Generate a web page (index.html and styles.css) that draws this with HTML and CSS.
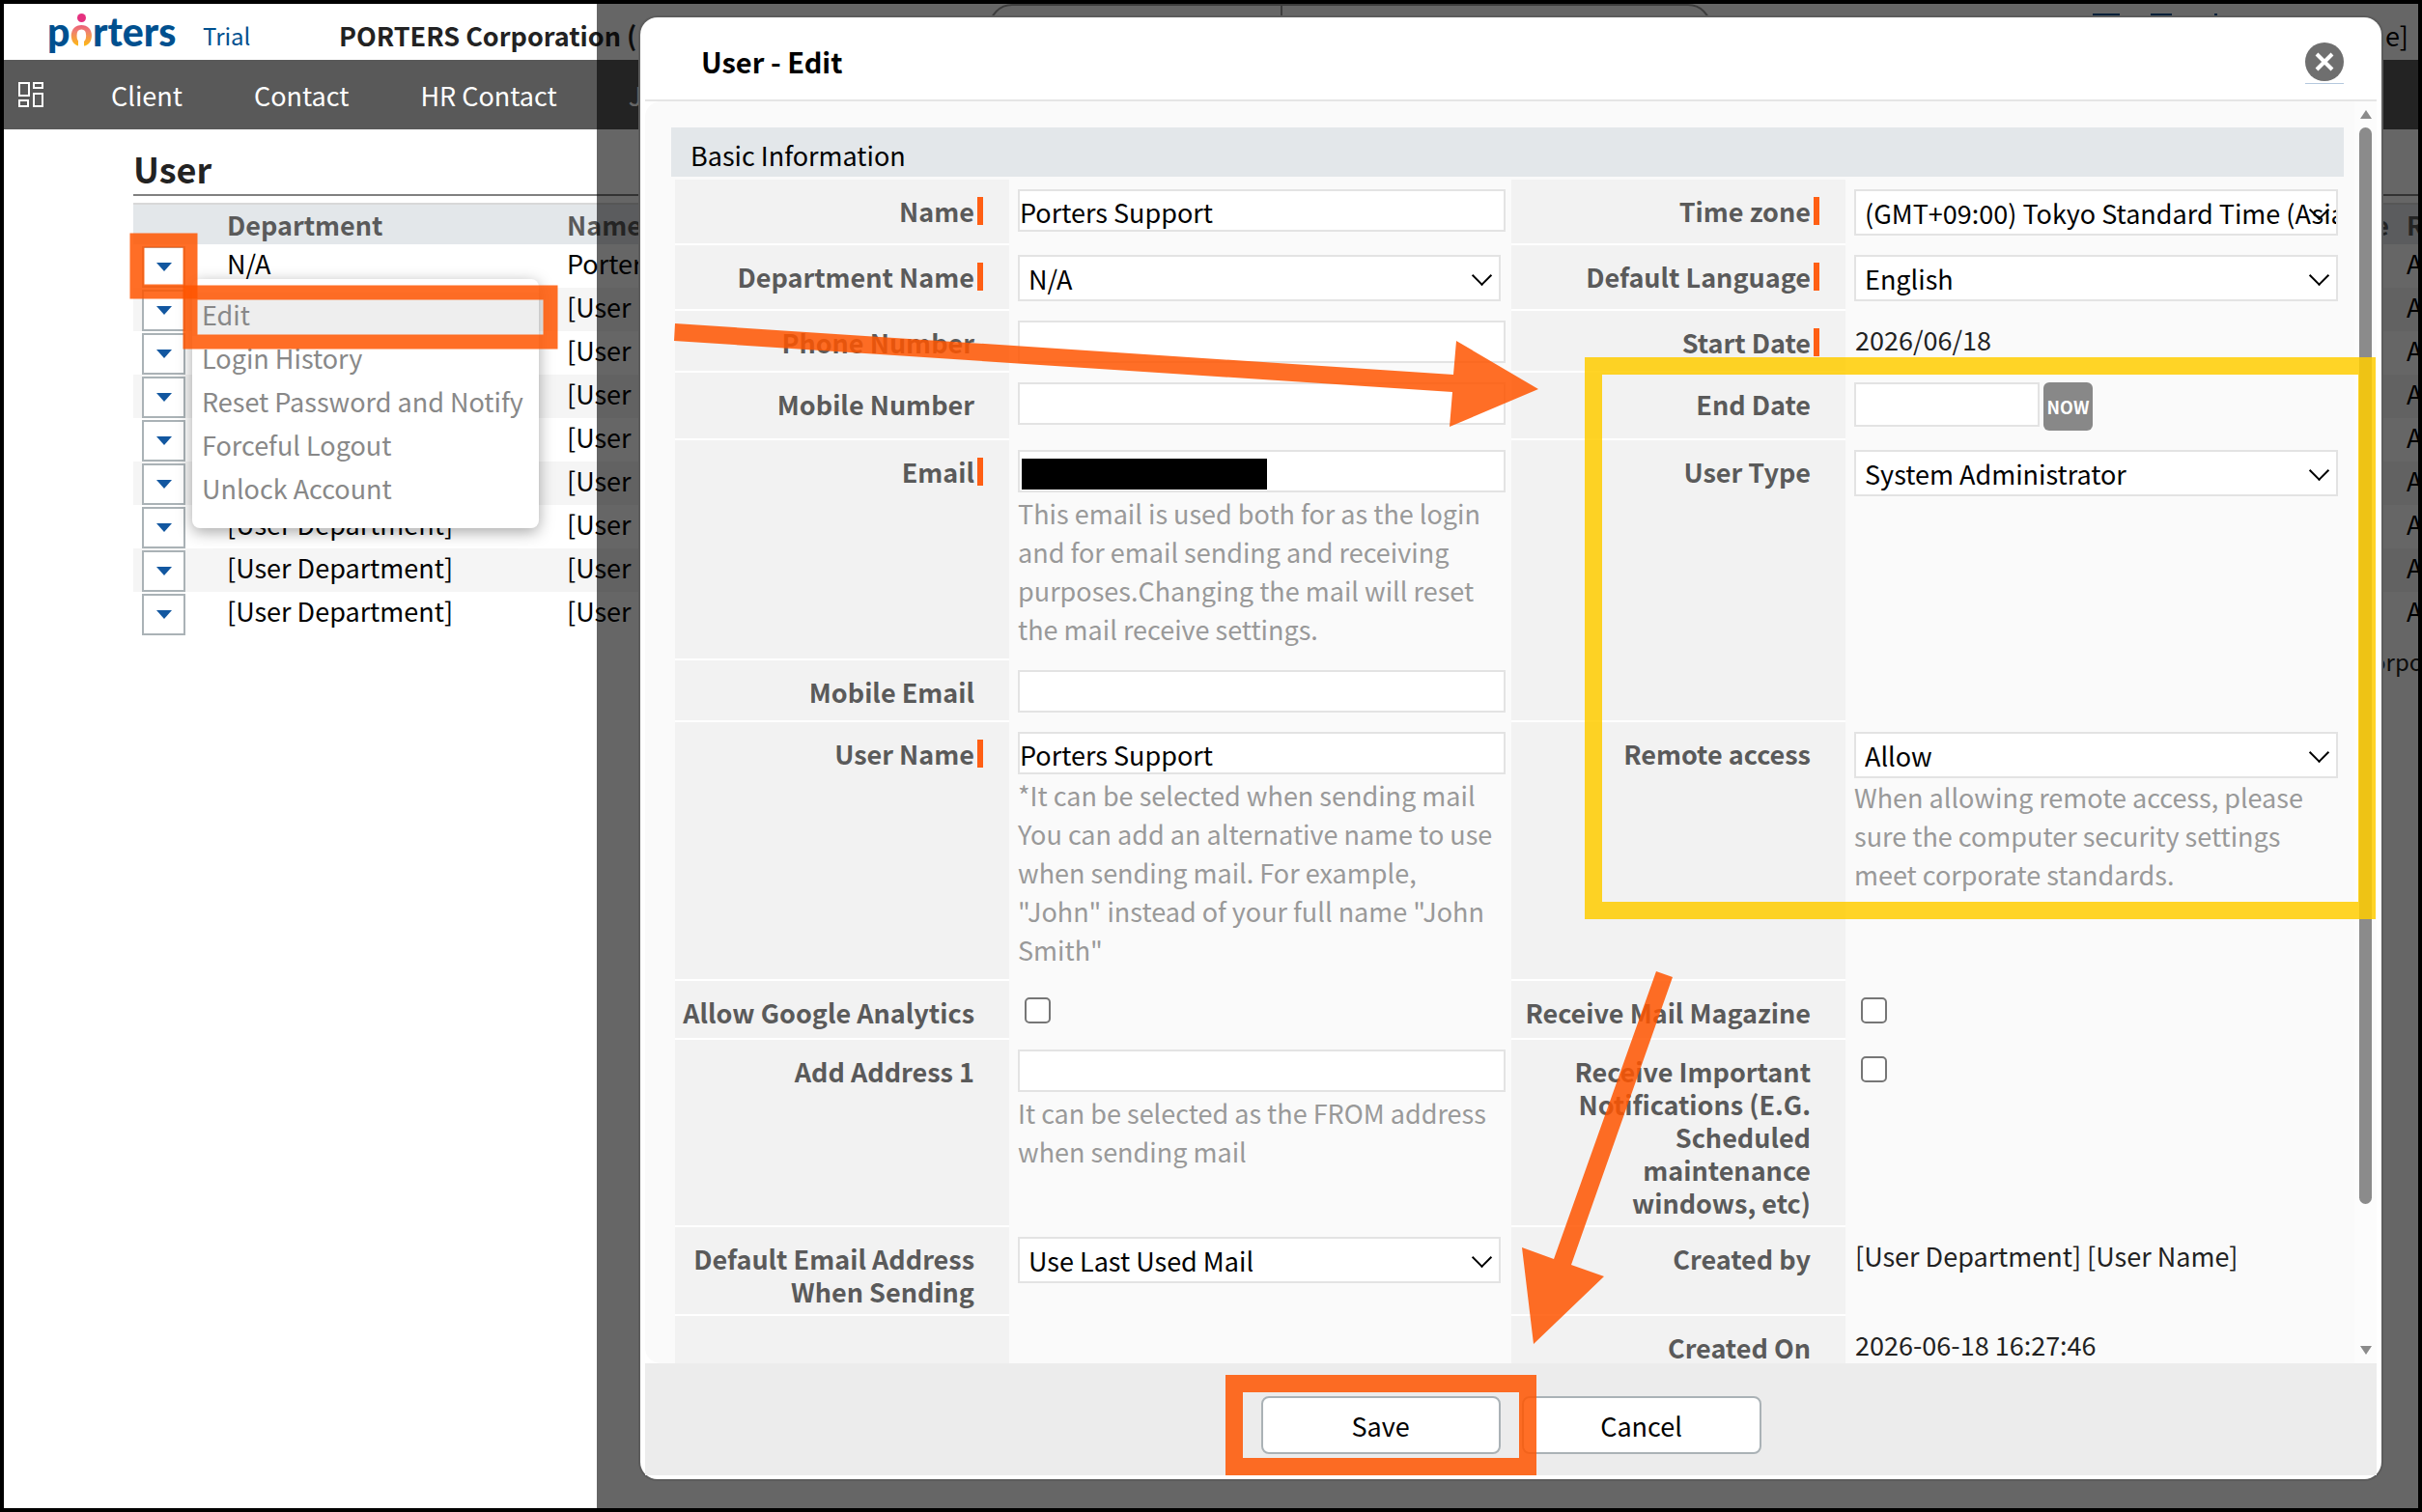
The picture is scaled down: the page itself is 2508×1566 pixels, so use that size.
FILE: index.html
```html
<!DOCTYPE html>
<html lang="en">
<head>
  <meta charset="UTF-8">
  <title>User - Edit</title>
  <link rel="stylesheet" href="styles.css">
</head>
<body>
<div class="page">
  <header class="topbar">
    <div class="logo">p<span class="logo-o">o</span>rters</div>
    <a href="#" class="trial">Trial</a>
    <strong class="company">PORTERS Corporation (</strong>
    <div class="search"><span></span></div>
    <div class="top-icons"><i class="top-doc"></i><i class="top-gear"></i><i class="top-help"></i></div>
    <a href="#" class="account">[User Name]</a>
  </header>
  <nav class="navbar">
    <svg class="grid-icon" viewBox="0 0 26 26" fill="none" stroke="#fff" stroke-width="2">
      <rect x="1" y="1" width="10" height="13"/>
      <rect x="16" y="1" width="9" height="5"/>
      <rect x="1" y="19" width="9" height="6"/>
      <rect x="16" y="12" width="9" height="13"/>
    </svg>
    <a href="#">Client</a>
    <a href="#">Contact</a>
    <a href="#">HR Contact</a>
    <a href="#">Job</a>
  </nav>
  <main class="content">
    <h1>User</h1>
    <table class="users">
      <colgroup><col class="c-action"><col class="c-dept"><col><col class="c-type"><col class="c-role"></colgroup>
      <thead>
        <tr><th></th><th>Department</th><th>Name</th><th class="right">Type</th><th>Role</th></tr>
      </thead>
      <tbody>
        <tr>
          <td>
            <div class="action">
              <button type="button" class="drop" aria-label="Actions"></button>
              <ul class="menu">
                <li class="active"><a href="#">Edit</a></li>
                <li><a href="#">Login History</a></li>
                <li><a href="#">Reset Password and Notify</a></li>
                <li><a href="#">Forceful Logout</a></li>
                <li><a href="#">Unlock Account</a></li>
              </ul>
            </div>
          </td>
          <td>N/A</td><td>Porters Support</td><td></td><td>Admin</td>
        </tr>
        <tr><td><button type="button" class="drop" aria-label="Actions"></button></td><td>[User Department]</td><td>[User Name]</td><td></td><td>Admin</td></tr>
        <tr><td><button type="button" class="drop" aria-label="Actions"></button></td><td>[User Department]</td><td>[User Name]</td><td></td><td>Admin</td></tr>
        <tr><td><button type="button" class="drop" aria-label="Actions"></button></td><td>[User Department]</td><td>[User Name]</td><td></td><td>Admin</td></tr>
        <tr><td><button type="button" class="drop" aria-label="Actions"></button></td><td>[User Department]</td><td>[User Name]</td><td></td><td>Admin</td></tr>
        <tr><td><button type="button" class="drop" aria-label="Actions"></button></td><td>[User Department]</td><td>[User Name]</td><td></td><td>Admin</td></tr>
        <tr><td><button type="button" class="drop" aria-label="Actions"></button></td><td>[User Department]</td><td>[User Name]</td><td></td><td>Admin</td></tr>
        <tr><td><button type="button" class="drop" aria-label="Actions"></button></td><td>[User Department]</td><td>[User Name]</td><td></td><td>Admin</td></tr>
        <tr><td><button type="button" class="drop" aria-label="Actions"></button></td><td>[User Department]</td><td>[User Name]</td><td></td><td>Admin</td></tr>
      </tbody>
    </table>
    <p class="copyright">&copy; PORTERS Corporation</p>
  </main>

  <div class="overlay">
    <form class="modal">
      <div class="modal-header">
        <h2>User - Edit</h2>
        <button type="button" class="close" aria-label="Close">
          <svg viewBox="0 0 40 40">
            <circle cx="20" cy="20" r="20" fill="#6f6f6f"/>
            <path d="M12 12 L28 28 M28 12 L12 28" stroke="#fff" stroke-width="4"/>
          </svg>
        </button>
      </div>
      <div class="modal-body">
        <div class="form-area">
          <h3>Basic Information</h3>
          <table class="fields">
            <colgroup><col class="c-label"><col class="c-value"><col class="c-label"><col></colgroup>
            <tr>
              <th><label class="required" for="name">Name</label></th>
              <td><input type="text" id="name" value="Porters Support"></td>
              <th><label class="required" for="zone">Time zone</label></th>
              <td><div class="select"><select id="zone"><option>(GMT+09:00) Tokyo Standard Time (Asia/Tokyo)</option></select></div></td>
            </tr>
            <tr>
              <th><label class="required" for="dept">Department Name</label></th>
              <td><div class="select"><select id="dept"><option>N/A</option></select></div></td>
              <th><label class="required" for="lang">Default Language</label></th>
              <td><div class="select"><select id="lang"><option>English</option></select></div></td>
            </tr>
            <tr>
              <th><label for="phone">Phone Number</label></th>
              <td><input type="text" id="phone"></td>
              <th><span class="required">Start Date</span></th>
              <td><div class="plain">2026/06/18</div></td>
            </tr>
            <tr>
              <th><label for="mobile">Mobile Number</label></th>
              <td><input type="text" id="mobile"></td>
              <th><label for="end">End Date</label></th>
              <td><div class="date"><input type="text" id="end"><button type="button" class="now">NOW</button></div></td>
            </tr>
            <tr>
              <th><label class="required" for="email">Email</label></th>
              <td>
                <div class="masked"><input type="text" id="email"><span></span></div>
                <p class="hint">This email is used both for as the login and for email sending and receiving purposes.Changing the mail will reset the mail receive settings.</p>
              </td>
              <th rowspan="2"><label for="type">User Type</label></th>
              <td rowspan="2"><div class="select"><select id="type"><option>System Administrator</option></select></div></td>
            </tr>
            <tr>
              <th><label for="memail">Mobile Email</label></th>
              <td><input type="text" id="memail"></td>
            </tr>
            <tr>
              <th><label class="required" for="uname">User Name</label></th>
              <td>
                <input type="text" id="uname" value="Porters Support">
                <p class="hint">*It can be selected when sending mail<br>You can add an alternative name to use when sending mail. For example, "John" instead of your full name "John Smith"</p>
              </td>
              <th><label for="remote">Remote access</label></th>
              <td>
                <div class="select"><select id="remote"><option>Allow</option></select></div>
                <p class="hint">When allowing remote access, please sure the computer security settings meet corporate standards.</p>
              </td>
            </tr>
            <tr>
              <th><label for="ga">Allow Google Analytics</label></th>
              <td class="check"><input type="checkbox" id="ga"></td>
              <th><label for="magazine">Receive Mail Magazine</label></th>
              <td class="check"><input type="checkbox" id="magazine"></td>
            </tr>
            <tr>
              <th><label for="addr">Add Address 1</label></th>
              <td>
                <input type="text" id="addr">
                <p class="hint">It can be selected as the FROM address when sending mail</p>
              </td>
              <th><label for="notif">Receive Important Notifications (E.G. Scheduled maintenance windows, etc)</label></th>
              <td class="check"><input type="checkbox" id="notif"></td>
            </tr>
            <tr>
              <th><label for="sendmail">Default Email Address When Sending</label></th>
              <td><div class="select"><select id="sendmail"><option>Use Last Used Mail</option></select></div></td>
              <th>Created by</th>
              <td><div class="plain">[User Department] [User Name]</div></td>
            </tr>
            <tr>
              <th></th>
              <td></td>
              <th>Created On</th>
              <td><div class="plain">2026-06-18 16:27:46</div></td>
            </tr>
          </table>
        </div>
        <div class="scrollbar">
          <span class="arrow-up"></span>
          <span class="track"><span class="thumb"></span></span>
          <span class="arrow-down"></span>
        </div>
      </div>
      <div class="modal-footer">
        <button type="button" class="btn">Save</button>
        <button type="button" class="btn">Cancel</button>
      </div>
    </form>
  </div>

  <!-- step markers drawn over the screen -->
  <svg class="marks" width="2508" height="1566">
    <g fill="none" stroke="#ff5500" stroke-opacity=".85">
      <rect x="142" y="249" width="55" height="53" stroke-width="15"/>
      <rect x="197" y="303" width="373" height="51" stroke-width="15"/>
      <rect x="1278" y="1433" width="304" height="86" stroke-width="18"/>
    </g>
    <rect x="1650" y="379" width="801" height="564" fill="none" stroke="#ffcc00" stroke-opacity=".85" stroke-width="18"/>
    <g fill="#ff5500" fill-opacity=".85">
      <polygon points="699,335 1505,388 1508,353 1593,403 1501,442 1504,406 698,353"/>
      <polygon points="1715,1006 1732,1012 1627,1310 1661,1322 1588,1392 1576,1292 1609,1304"/>
    </g>
  </svg>
</div>
</body>
</html>
```
FILE: styles.css
```css
* { box-sizing: border-box; }
body {
  margin: 0;
  font-family: "Noto Sans CJK JP", "Noto Sans", sans-serif;
  font-size: 27px;
  line-height: 41px;
  color: #222;
}
a { color: inherit; text-decoration: none; }
p, h1, h2, h3, ul { margin: 0; padding: 0; }
button, input, select { font: inherit; color: #000; }
.page {
  position: relative;
  height: 100vh;
  border: 4px solid #000;
  background: #fff;
  overflow: hidden;
}

/* top bar */
.topbar {
  position: relative;
  display: flex;
  align-items: center;
  height: 58px;
  padding: 6px 10px 0 45px;
}
.logo {
  width: 161px;
  font-family: Lato, sans-serif;
  font-weight: 900;
  font-size: 41px;
  line-height: 48px;
  padding-bottom: 6px;
  color: #00508f;
}
.logo-o {
  position: relative;
  color: transparent;
  background: linear-gradient(#e5317f 20%, #f08070 50%, #fdb913 80%);
  -webkit-background-clip: text;
  background-clip: text;
}
.logo-o::before {
  content: "";
  position: absolute;
  left: 8px;
  top: 6px;
  width: 9px;
  height: 9px;
  border-radius: 50%;
  background: #e5317f;
}
.logo-o::after {
  content: "";
  position: absolute;
  left: 9px;
  bottom: 8px;
  width: 6px;
  height: 8px;
  background: #fff;
}
.trial { width: 141px; font-size: 24px; color: #00508f; }
.company { white-space: nowrap; }
.search {
  position: absolute;
  left: 1020px;
  top: 0;
  width: 748px;
  height: 60px;
  border: 2px solid #999;
  border-radius: 24px;
}
.search span { display: block; width: 302px; height: 56px; border-right: 2px solid #999; }
.top-icons {
  position: absolute;
  right: 208px;
  top: 10px;
  display: flex;
  gap: 32px;
}
.top-icons i { height: 26px; border-top: 2px solid #00508f; }
.top-doc { width: 28px; }
.top-gear { width: 22px; }
.top-help { width: 3px; margin-left: 12px; }
.account { margin-left: auto; color: #000; }

.navbar {
  display: flex;
  align-items: center;
  gap: 74px;
  height: 72px;
  padding-left: 15px;
  background: #595959;
  color: #fff;
}
.navbar .grid-icon { width: 26px; height: 26px; margin-right: -4px; }

/* user list */
.content { padding-left: 134px; }
h1 {
  margin: 13px 0 7px;
  font-size: 36px;
  line-height: 54px;
  border-bottom: 2px solid #808080;
}
.users {
  width: 100%;
  table-layout: fixed;
  border-collapse: separate;
  border-spacing: 0;
  color: #000;
}
.c-action { width: 97px; }
.c-dept { width: 352px; }
.c-type { width: 120px; }
.c-role { width: 12px; }
.users th {
  padding: 0;
  border-top: 2px solid #d8d8d8;
  background: #e3e7ea;
  text-align: left;
  color: #5a5a5a;
}
.users th.right { text-align: right; padding-right: 18px; }
.users td {
  height: 45px;
  padding: 0;
  line-height: 40px;
  vertical-align: top;
  white-space: nowrap;
}
.users tbody tr:nth-child(even) { background: #f5f5f5; }
.users td:first-child { padding: 2px 0 0 9px; }
.action { position: relative; }
.drop {
  display: flex;
  align-items: center;
  justify-content: center;
  width: 45px;
  height: 43px;
  padding: 0;
  border: 2px solid #aab2b6;
  background: #fff;
}
.drop::before {
  content: "";
  border: 8px solid transparent;
  border-top: 9px solid #1257a0;
  border-bottom: 0;
}
.menu {
  position: absolute;
  z-index: 1;
  left: 52px;
  top: 34px;
  width: 359px;
  padding: 14px 0 19px;
  border-radius: 8px;
  background: #fff;
  box-shadow: 0 4px 16px rgba(0,0,0,0.35);
  list-style: none;
  color: #888;
}
.menu li { padding-left: 10px; line-height: 45px; }
.menu .active { background: #eee; }
.copyright {
  margin: 6px -72px 0 0;
  font-size: 24px;
  text-align: right;
}

/* dialog */
.overlay {
  position: absolute;
  z-index: 2;
  top: 0;
  right: 0;
  bottom: 0;
  left: 614px;
  display: flex;
  padding: 14px 38px 30px 45px;
  background: rgba(0,0,0,0.6);
}
.modal {
  flex: 1;
  display: flex;
  flex-direction: column;
  padding: 0 5px 4px;
  border-radius: 18px;
  background: #fff;
  box-shadow: 0 0 0 2px #5c5c5c;
}
.modal-header {
  display: flex;
  align-items: center;
  justify-content: space-between;
  height: 87px;
  padding: 6px 34px 0 58px;
  border-bottom: 2px solid #e5e5e5;
}
h2 { font-size: 29px; color: #000; }
.close {
  width: 40px;
  height: 44px;
  margin-top: 2px;
  padding: 0;
  border: 0;
  border-bottom: 1px solid #b4c8de;
  background: none;
}
.close svg { display: block; width: 40px; height: 40px; }
.modal-body {
  flex: 1;
  display: flex;
  min-height: 0;
  border-radius: 16px 0 0 16px;
  background: #fafafa;
  overflow: hidden;
}
.form-area { flex: 1; padding: 27px 11px 0 27px; }
h3 {
  padding: 8px 20px 2px;
  background: #e3e7ea;
  font-size: 27px;
  font-weight: normal;
  color: #000;
}
.form-area .fields {
  width: calc(100% - 4px);
  margin: 3px 0 0 4px;
  table-layout: fixed;
  border-spacing: 0;
}
.c-label { width: 346px; }
.c-value { width: 520px; }
.fields th {
  position: relative;
  padding: 16px 36px 6px 6px;
  border-bottom: 2px solid #fff;
  background: #f2f2f2;
  text-align: right;
  vertical-align: top;
  line-height: 34px;
  color: #5a5a5a;
}
.required::after {
  content: "";
  position: absolute;
  right: 27px;
  top: 18px;
  width: 6px;
  height: 29px;
  background: #ff5f14;
}
.fields td { padding: 10px 6px 10px 9px; vertical-align: top; }
.fields input[type="text"] {
  display: block;
  width: 100%;
  height: 44px;
  padding: 2px 0 0;
  border: 2px solid #e3e3e3;
  background: #fff;
}
.select { position: relative; margin-right: 5px; }
td:last-child .select { margin-right: 0; }
.select select {
  display: block;
  width: 100%;
  height: 48px;
  padding: 0 0 0 9px;
  border: 2px solid #e3e3e3;
  border-radius: 0;
  background: #fff;
  appearance: none;
}
.select::after {
  content: "";
  position: absolute;
  right: 12px;
  top: 14px;
  width: 13px;
  height: 13px;
  border: solid #000;
  border-width: 0 2px 2px 0;
  transform: rotate(45deg);
  pointer-events: none;
}
.plain { padding-left: 1px; line-height: 40px; }
.hint { padding: 2px 0; line-height: 40px; color: #999; }
.select + .hint { padding-top: 0; }
.date { display: flex; gap: 4px; }
.fields .date input { width: 192px; height: 46px; }
.now {
  width: 51px;
  height: 50px;
  padding: 0;
  border: 0;
  border-radius: 6px;
  background: #888;
  font-size: 18px;
  font-weight: bold;
  color: #fff;
}
.masked { position: relative; }
.masked span {
  position: absolute;
  left: 4px;
  top: 9px;
  width: 254px;
  height: 32px;
  background: #000;
}
.fields .check { line-height: 0; padding: 17px 16px; }
.check input {
  width: 27px;
  height: 27px;
  margin: 0;
  border: 2px solid #767676;
  border-radius: 5px;
  background: #fff;
  appearance: none;
}
.scrollbar {
  display: flex;
  flex-direction: column;
  align-items: center;
  width: 23px;
  padding: 9px 0;
  background: #fcfcfc;
}
.track { flex: 1; padding: 9px 0; }
.thumb { display: block; width: 13px; height: 89%; border-radius: 7px; background: #8b8b8b; }
.arrow-up { border: 6px solid transparent; border-top: 0; border-bottom: 9px solid #8b8b8b; }
.arrow-down { border: 6px solid transparent; border-bottom: 0; border-top: 9px solid #8b8b8b; }
.modal-footer {
  display: flex;
  justify-content: center;
  gap: 22px;
  height: 116px;
  padding-top: 34px;
  background: #ececec;
}
.btn {
  width: 248px;
  height: 60px;
  padding: 0;
  border: 2px solid #aab2b6;
  border-radius: 8px;
  background: #fff;
}

.marks { position: absolute; z-index: 3; left: -4px; top: -4px; pointer-events: none; }
```
